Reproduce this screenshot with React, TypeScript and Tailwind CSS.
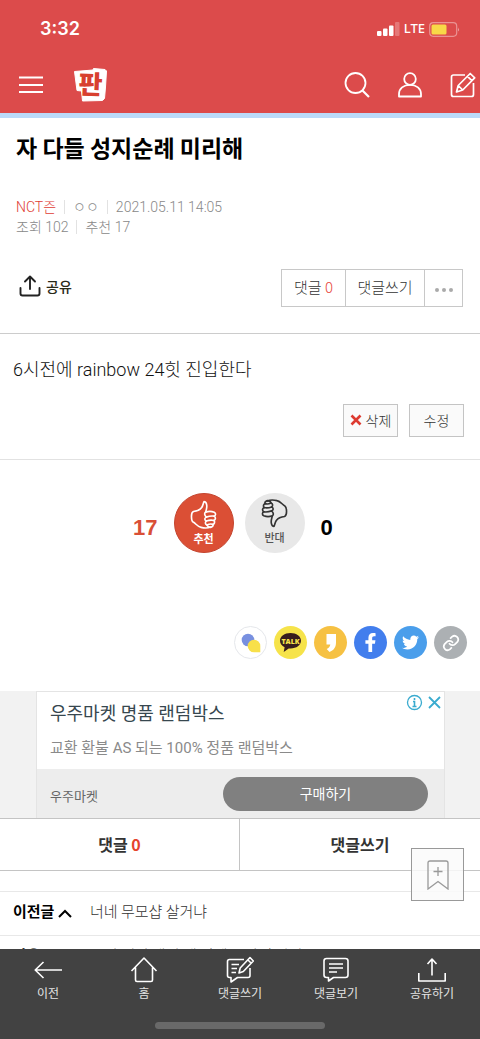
import { ReactNode } from "react";
import { FaFacebookF, FaTwitter } from "react-icons/fa";

const MenuIcon = () => (
  <svg width="26" height="20" viewBox="0 0 26 20" stroke="white" strokeWidth="1.800" fill="none">
    <path d="M1 2.500h24M1 10h24M1 17h24" />
  </svg>
);

const Logo = () => (
  <svg width="34" height="34" viewBox="0 0 34 34" overflow="visible">
    <path
      d="M.5 3.500 19 2l.5-1.500L31 1.500l1.500 1.500-1 16-1 11.500-2 2L8.500 33l-1-10-4.500-.5z"
      fill="white"
      stroke="white"
      strokeWidth="1"
      strokeLinejoin="round"
    />
    <text
      x="16.500"
      y="26"
      textAnchor="middle"
      fontSize="26"
      fontWeight="900"
      fill="#d8402f"
      transform="rotate(2 17 17)"
      fontFamily="'Noto Sans CJK KR', sans-serif"
    >
      판
    </text>
  </svg>
);

const SearchIcon = () => (
  <svg width="26" height="26" viewBox="0 0 26 26" stroke="white" strokeWidth="1.800" fill="none">
    <circle cx="11.500" cy="11" r="10" />
    <path d="M18.500 18.500 25 25" strokeWidth="2.200" />
  </svg>
);

const UserIcon = () => (
  <svg width="24" height="26" viewBox="0 0 24 26" stroke="white" strokeWidth="1.800" fill="none">
    <circle cx="12" cy="7" r="5.800" />
    <path d="M1 24.500v-2.500c0-5.500 4.500-9.200 11-9.200s11 3.700 11 9.200v2.500z" strokeLinejoin="round" />
  </svg>
);

const WriteIcon = () => (
  <svg width="26" height="26" viewBox="0 0 26 26" stroke="white" strokeWidth="1.700" fill="none" strokeLinejoin="round">
    <path d="M15 3H3.500Q1.500 3 1.500 5v17.500q0 2 2 2h18q2 0 2-2V11" />
    <path d="m6.500 20 1.700-6.500L20.200 1.500l4.500 4.300L12.700 18zM8.200 13.500l4.500 4.500M17.500 4.300l4.400 4.300" />
  </svg>
);

const ShareIcon = () => (
  <svg width="22" height="22" viewBox="0 0 22 22" stroke="#222" strokeWidth="1.900" fill="none" strokeLinecap="round" strokeLinejoin="round">
    <path d="M1.500 13v5.500q0 2 2 2h15q2 0 2-2V13M11 14V1.500M6 6.500l5-5 5 5" />
  </svg>
);

const ThumbIcon = ({ className }: { className?: string }) => (
  <svg
    width="27"
    height="29"
    viewBox="-3 -3 81 88"
    stroke="currentColor"
    strokeWidth="5"
    fill="none"
    strokeLinecap="round"
    strokeLinejoin="round"
    className={className}
  >
    <path d="M44 34c2-8 5-14 3-23-1-6-4-9-8-9-3 6-3 12-7 18-6 8-14 11-25 12-5 2-6 7-6 14 0 8 0 15 5 18 8 4 13 14 24 16 8 2 22 2 29-1" />
    <path d="M44 46c-4-5-4-9 0-12 8-3 18-3 26 0 6 3 5 10 0 12-8-1-16 0-24 3" />
    <path d="M70 46c6 4 4 11-1 13-8-2-15-1-23 2-6-4-6-9 0-12" />
    <path d="M69 59c4 4 2 10-3 12-6-2-12-1-18 2-6-3-6-9-2-12" />
    <path d="M66 71c2 4-1 7-7 9-4 0-9-2-11-7" />
  </svg>
);

const ShareButtons = () => {
  const base = "size-[33px] rounded-full flex items-center justify-center cursor-pointer";
  return (
    <div className="flex justify-end gap-[7px] pr-[13px] pt-[73px] pb-8">
      <button aria-label="네이트온" className={`${base} bg-white border border-gray-200`}>
        <svg width="20" height="20" viewBox="0 0 20 20">
          <circle cx="7" cy="7" r="6.300" fill="#7890e0" />
          <path d="M13 6.700a6.300 6.300 0 1 0 0 12.600h6.300V13A6.300 6.300 0 0 0 13 6.700z" fill="#f8e04a" />
        </svg>
      </button>
      <button aria-label="카카오톡" className={`${base} bg-[#f6e34a]`}>
        <svg width="23" height="21" viewBox="0 0 23 21">
          <path d="M11.500 1C5.500 1 1 4.300 1 8.700c0 2.800 1.800 5.200 4.600 6.600L4.700 20l5-3.600h1.800c6 0 10.500-3.300 10.500-7.700S17.500 1 11.500 1z" fill="#371d1e" />
          <text x="11.500" y="11.500" textAnchor="middle" fontSize="7" fontWeight="800" fill="#f6e34a" fontFamily="'Open Sans', sans-serif">
            TALK
          </text>
        </svg>
      </button>
      <button aria-label="카카오스토리" className={`${base} bg-[#f6c143]`}>
        <svg width="12" height="18" viewBox="0 0 12 18">
          <path d="M1.500 0H11v8.500c0 5-2.500 8-6.500 9.500L1.700 15c2-.8 3.300-2.200 3.600-4.500H1.500z" fill="white" />
        </svg>
      </button>
      <button aria-label="페이스북" className={`${base} bg-[#427eed]`}>
        <FaFacebookF size={19} color="white" />
      </button>
      <button aria-label="트위터" className={`${base} bg-[#4a9eeb]`}>
        <FaTwitter size={17} color="white" />
      </button>
      <button aria-label="링크 복사" className={`${base} bg-[#acb0b3]`}>
        <svg width="18" height="18" viewBox="0 0 24 24" stroke="white" strokeWidth="2.300" fill="none" strokeLinecap="round">
          <path d="M10 13a5 5 0 0 0 7.500.5l3-3a5 5 0 0 0-7-7l-2 2" />
          <path d="M14 11a5 5 0 0 0-7.500-.5l-3 3a5 5 0 0 0 7 7l2-2" />
        </svg>
      </button>
    </div>
  );
};

const Ad = () => (
  <div className="bg-[#f2f2f2] pl-9 pr-[35px] font-['Roboto','Noto_Sans_CJK_KR',sans-serif]">
    <div className="bg-white border border-b-0 border-[#e4e4e4] relative">
      <div className="h-[77px] px-[13px] pt-2">
        <h3 className="text-lg leading-7 text-[#37474f]">우주마켓 명품 랜덤박스</h3>
        <p className="text-[15px] leading-5 mt-2.5 text-[#8a8a8a]">교환 환불 AS 되는 100% 정품 랜덤박스</p>
      </div>
      <div className="bg-[#ededed] h-[49px] pl-[13px] pr-4 flex items-center justify-between">
        <span className="text-[13px] text-[#666] pt-1.5">우주마켓</span>
        <a href="#" className="bg-[#808080] text-white text-sm rounded-full w-[205px] h-[34px] flex items-center justify-center">
          구매하기
        </a>
      </div>
      <div className="absolute top-0.5 right-0.5 flex items-center gap-1 text-[#3aabcf]">
        <button aria-label="광고 정보">
          <svg width="17" height="17" viewBox="0 0 17 17" fill="none" stroke="currentColor" className="block">
            <circle cx="8.500" cy="8.500" r="7" strokeWidth="1.300" />
            <path d="M8.500 4v2M7 7.500h1.500v4.500M6.500 12.500h4" strokeWidth="1.600" />
          </svg>
        </button>
        <button aria-label="광고 닫기">
          <svg width="15" height="15" viewBox="0 0 15 15" stroke="currentColor" strokeWidth="1.800" className="block">
            <path d="m2 2 11 11M13 2 2 13" />
          </svg>
        </button>
      </div>
    </div>
  </div>
);

const NavItem = ({ label, children }: { label: string; children: ReactNode }) => (
  <button className="flex-1 flex flex-col items-center cursor-pointer">
    <svg width="28" height="28" viewBox="0 0 28 28" stroke="white" strokeWidth="1.600" fill="none" strokeLinejoin="round">
      {children}
    </svg>
    <span className="text-xs leading-5 text-[#e4e4e4]">{label}</span>
  </button>
);

const BottomNav = () => (
  <nav className="bg-[#424242] shrink-0 relative">
    <div className="flex pt-1.5">
      <NavItem label="이전">
        <path d="M28 15H1M9.500 7 1.200 15l8.300 8" />
      </NavItem>
      <NavItem label="홈">
        <path d="M1.500 16 14 3l12.500 13M5.500 12.500V25q0 1.500 1.500 1.500h14q1.500 0 1.500-1.500V12.500" />
      </NavItem>
      <NavItem label="댓글쓰기">
        <path d="M18 4.500H3.500q-2 0-2 2v14q0 2 2 2H5V27l6.500-4.500H22q2 0 2-2V13" />
        <path d="m13 18 1.200-5L24 2.500 27.300 6l-10 10.500zM5.500 9.500H13M5.500 13.500H11M5.500 17.500H10M22 5l3 3" />
      </NavItem>
      <NavItem label="댓글보기">
        <path d="M4.500 3.500h19q2.500 0 2.500 2.500v14q0 2.500-2.500 2.500H11.500L6.500 26v-3.500h-2Q2 22.500 2 20V6q0-2.500 2.500-2.500z" />
        <path d="M7 9h14M7 13h14M7 17h8" />
      </NavItem>
      <NavItem label="공유하기">
        <path d="M.8 18v8h26.400v-8M14 20.500V4M9.500 9 14 4l4.500 5" />
      </NavItem>
    </div>
    <div className="w-[170px] h-[7px] rounded-full bg-[#696969] mx-auto mt-[19px] mb-2.5" />

    <button
      aria-label="스크랩"
      className="absolute bottom-full right-4 mb-12 size-[53px] border border-[#999] bg-[#fafafa]/85 flex items-center justify-center cursor-pointer"
    >
      <svg width="22" height="30" viewBox="0 0 22 30" stroke="#999" strokeWidth="1.300" fill="none">
        <path d="M1 29V3q0-2 2-2h16q2 0 2 2v26l-10-7.500zM11 7v9M6.500 11.500h9" />
      </svg>
    </button>
  </nav>
);

const App = () => {
  return (
    <div className="h-screen flex flex-col bg-white text-[#333] font-['Noto_Sans_CJK_KR',sans-serif]">
      <header className="bg-[#dc4b4b] text-white shrink-0">
        <div className="h-14 pl-10 pr-5 pt-0.5 flex items-center justify-between">
          <span className="text-lg font-semibold font-['Inter',sans-serif]">3:32</span>
          <div className="flex items-center gap-1">
            <svg width="23" height="14" viewBox="0 0 23 14" fill="white">
              <rect x="0" y="9" width="4.500" height="5" rx="1" />
              <rect x="6" y="6.500" width="4.500" height="7.500" rx="1" />
              <rect x="12" y="3.500" width="4.500" height="10.500" rx="1" />
              <rect x="18" y="0" width="4.500" height="14" rx="1" opacity="0.25" />
            </svg>
            <span className="text-[13px] font-medium font-['Noto_Sans',sans-serif]">LTE</span>
            <svg width="31" height="15" viewBox="0 0 31 15">
              <rect x="0.700" y="0.700" width="27" height="13.600" rx="3.500" fill="none" stroke="white" strokeOpacity="0.4" strokeWidth="1.200" />
              <rect x="2.500" y="2.500" width="15" height="10" rx="1.500" fill="#f8d848" />
              <path d="M29 5.500q1.800 2 0 4z" fill="white" opacity="0.5" />
            </svg>
          </div>
        </div>
        <div className="h-[57px] pl-[18px] pr-1 flex items-center justify-between">
          <div className="flex items-center gap-[30px]">
            <button aria-label="메뉴"><MenuIcon /></button>
            <a href="#" aria-label="판"><Logo /></a>
          </div>
          <div className="flex items-center gap-7">
            <button aria-label="검색"><SearchIcon /></button>
            <button aria-label="내 정보"><UserIcon /></button>
            <button aria-label="글쓰기"><WriteIcon /></button>
          </div>
        </div>
      </header>

      <main className="flex-1 min-h-0 overflow-y-auto [scrollbar-width:none]">
        <div className="h-[5px] bg-[#bbdbfa]" />

        <div className="pl-4 pr-[17px] pt-3.5 border-b border-[#ccc]">
          <h1 className="text-[23px] leading-[30px] font-bold text-black">자 다들 성지순례 미리해</h1>
          <div className="mt-[35px] text-sm leading-5 font-light text-[#888] font-['Roboto','Noto_Sans_CJK_KR',sans-serif]">
            <div className="flex items-center">
              <a href="#" className="text-[#e03c34]">NCT즌</a>
              <span className="w-px h-3.5 bg-[#e2e2e2] mx-2" />
              <span>ㅇㅇ</span>
              <span className="w-px h-3.5 bg-[#e2e2e2] mx-2" />
              <span>2021.05.11 14:05</span>
            </div>
            <div className="flex items-center">
              <span>조회 102</span>
              <span className="w-px h-3.5 bg-[#e2e2e2] mx-2" />
              <span>추천 17</span>
            </div>
          </div>
          <div className="flex items-center justify-between mt-8 mb-[26px] pl-[3px]">
            <button className="flex items-center gap-[5px] pb-1 text-sm font-medium text-[#2a2a18] cursor-pointer">
              <ShareIcon />
              공유
            </button>
            <div className="flex h-[38px] border border-[#c8c8c8] divide-x divide-[#c8c8c8] text-[15px] font-light">
              <button className="px-3 pb-0.5 cursor-pointer">
                댓글 <span className="text-[#e8483c]">0</span>
              </button>
              <button className="w-[79px] pb-0.5 cursor-pointer">댓글쓰기</button>
              <button aria-label="더보기" className="w-[37px] flex items-center justify-center gap-[3px] pt-1 cursor-pointer">
                <span className="size-1 rounded-full bg-[#aaa]" />
                <span className="size-1 rounded-full bg-[#aaa]" />
                <span className="size-1 rounded-full bg-[#aaa]" />
              </button>
            </div>
          </div>
        </div>

        <div className="pl-[13px] pr-4 pt-[22px] pb-[22px] border-b border-[#e2e2e2]">
          <p className="text-lg leading-7 font-light text-[#111] font-['Roboto','Noto_Sans_CJK_KR',sans-serif]">
            6시전에 rainbow 24힛 진입한다
          </p>
          <div className="flex justify-end gap-[11px] mt-5 text-sm font-light">
            <button className="w-[55px] h-[33px] border border-[#c4c4c4] bg-[#fafafa] flex items-center justify-center gap-1 pb-0.5 cursor-pointer">
              <svg width="12" height="12" viewBox="0 0 12 12" stroke="#dd3a30" strokeWidth="2.600">
                <path d="m1.500 1.500 9 9M10.500 1.500l-9 9" />
              </svg>
              삭제
            </button>
            <button className="w-[55px] h-[33px] border border-[#c4c4c4] bg-[#fafafa] pb-0.5 cursor-pointer">수정</button>
          </div>
        </div>

        <div className="flex justify-center items-center pt-[33px] pr-0.5">
          <span className="text-[22px] font-bold text-[#d94f36] pt-2 w-12 mr-4 text-right font-['Liberation_Sans',sans-serif]">17</span>
          <button className="size-[60px] rounded-full bg-[#db4f35] border border-[#c4452f] text-white flex flex-col items-center pt-1.5 mr-[11px] cursor-pointer">
            <ThumbIcon />
            <span className="text-[11px] leading-4 font-bold mt-px">추천</span>
          </button>
          <button className="size-[60px] rounded-full bg-[#e8e8e8] text-[#333] flex flex-col items-center pt-1.5 cursor-pointer">
            <ThumbIcon className="rotate-180" />
            <span className="text-[11px] leading-4 font-medium mt-px text-[#555]">반대</span>
          </button>
          <span className="text-[22px] font-bold text-black pt-2 w-12 ml-4 font-['Liberation_Sans',sans-serif]">0</span>
        </div>

        <ShareButtons />
        <Ad />

        <div className="grid grid-cols-2 divide-x divide-[#c4c4c4] border-y border-[#c4c4c4] text-base font-bold h-[53px]">
          <button className="pb-0.5 cursor-pointer">
            댓글 <span className="text-[#e5432d]">0</span>
          </button>
          <button className="pb-0.5 cursor-pointer">댓글쓰기</button>
        </div>

        <ul className="mt-5 border-t border-[#e8e8e8] text-[15px]">
          <li className="h-11 border-b border-[#e8e8e8] px-[13px] pb-1 flex items-center">
            <span className="w-[77px] flex items-center gap-1 font-bold text-black">
              이전글
              <svg width="14" height="9" viewBox="0 0 14 9" stroke="black" strokeWidth="2" fill="none" className="mt-1">
                <path d="m1 8 6-6 6 6" />
              </svg>
            </span>
            <a href="#" className="font-light">너네 무모샵 살거냐</a>
          </li>
          <li className="h-11 border-b border-[#e8e8e8] px-[13px] pb-1 flex items-center">
            <span className="w-[77px] flex items-center gap-1 font-bold text-black">
              다음글
              <svg width="14" height="9" viewBox="0 0 14 9" stroke="black" strokeWidth="2" fill="none" className="mt-1">
                <path d="m1 1 6 6 6-6" />
              </svg>
            </span>
            <a href="#" className="font-light">우리 애기 생일 때 이벤트 같이 하자</a>
          </li>
        </ul>
      </main>

      <BottomNav />
    </div>
  );
};

export default App;
